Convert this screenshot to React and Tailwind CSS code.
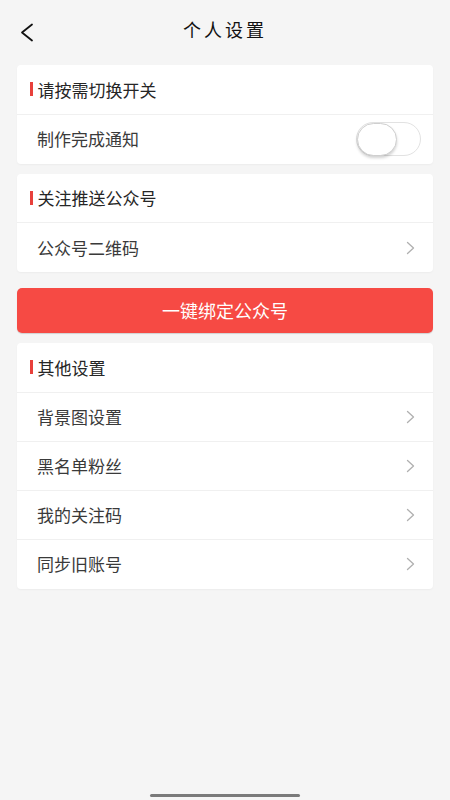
import { useState } from 'react'

const FONT = { fontFamily: '"Noto Sans CJK SC", "Noto Sans", sans-serif' }

function Chevron() {
  return (
    <svg width="9" height="14" viewBox="0 0 9 14" fill="none" className="shrink-0">
      <path d="M1.5 1.5L7.5 7L1.5 12.5" stroke="#b0b0b0" strokeWidth="1.3" strokeLinecap="round" strokeLinejoin="round" />
    </svg>
  )
}

function SectionTitle({ children }) {
  return (
    <div className="h-[49.5px] flex items-center pl-[13px] border-b border-[#f0f0f0]">
      <span className="w-[2.5px] h-[14px] bg-[#e8403b] mr-[5px]" />
      <span className="text-[17px] text-[#262626]">{children}</span>
    </div>
  )
}

function Row({ label, last, children }) {
  return (
    <div className={`h-[49px] flex items-center justify-between pl-[20px] pr-[18px] ${last ? '' : 'border-b border-[#f0f0f0]'}`}>
      <span className="text-[17px] text-[#3a3a3a]">{label}</span>
      {children || <Chevron />}
    </div>
  )
}

function Toggle({ on, onChange }) {
  return (
    <button
      onClick={() => onChange(!on)}
      className="w-[65px] h-[34px] rounded-full border border-[#e2e2e2] bg-white flex items-center -mr-[6px]"
    >
      <span className="w-[40px] h-[33px] rounded-full bg-white border border-[#cfcfcf] shadow-[0_2px_3px_rgba(0,0,0,0.18)]" />
    </button>
  )
}

export default function App() {
  const [notify, setNotify] = useState(false)

  return (
    <div className="min-h-screen bg-[#f5f5f5] flex flex-col" style={FONT}>
      {/* header */}
      <div className="h-[65px] flex items-center relative">
        <div className="pl-[20px] pb-[1px]">
          <svg width="14" height="19" viewBox="0 0 14 19" fill="none">
            <path d="M12 1.5L2 9.5L12 17.5" stroke="#111" strokeWidth="1.8" strokeLinecap="round" strokeLinejoin="round" />
          </svg>
        </div>
        <div className="absolute inset-x-0 top-0 h-[65px] flex items-center justify-center pointer-events-none">
          <span
            className="text-[18px] text-[#111] tracking-[3px] pb-[2px]"
            style={{ fontFamily: '"Liberation Serif", "Noto Sans CJK SC", serif' }}
          >
            个人设置
          </span>
        </div>
      </div>

      <div className="px-[17px] flex flex-col">
        <div className="bg-white rounded-[4px] shadow-[0_1px_2px_rgba(0,0,0,0.04)]">
          <SectionTitle>请按需切换开关</SectionTitle>
          <Row label="制作完成通知" last>
            <Toggle on={notify} onChange={setNotify} />
          </Row>
        </div>

        <div className="bg-white rounded-[4px] mt-[10px] shadow-[0_1px_2px_rgba(0,0,0,0.04)]">
          <SectionTitle>关注推送公众号</SectionTitle>
          <Row label="公众号二维码" last />
        </div>

        <button className="mt-[16px] h-[45px] rounded-[5px] bg-[#f64a44] text-white text-[18px] flex items-center justify-center shadow-[0_1px_1px_rgba(0,0,0,0.15)]">
          一键绑定公众号
        </button>

        <div className="bg-white rounded-[4px] mt-[10px] shadow-[0_1px_2px_rgba(0,0,0,0.04)]">
          <SectionTitle>其他设置</SectionTitle>
          <Row label="背景图设置" />
          <Row label="黑名单粉丝" />
          <Row label="我的关注码" />
          <Row label="同步旧账号" last />
        </div>
      </div>

      <div className="mt-auto h-[6px] flex justify-center">
        <span className="w-[150px] h-[3px] rounded-full bg-[#7a7a7a]" />
      </div>
    </div>
  )
}
